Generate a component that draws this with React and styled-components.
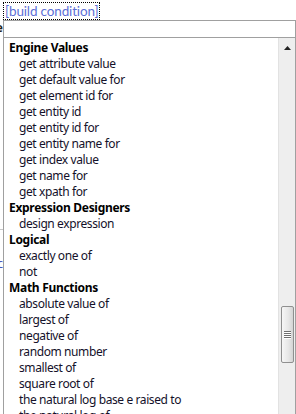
import styled, { createGlobalStyle } from "styled-components";

const GlobalStyle = createGlobalStyle`
  html, body {
    margin: 0;
    padding: 0;
    background: #fff;
  }
  body {
    font-family: "Noto Sans", "DejaVu Sans", sans-serif;
    width: 296px;
    height: 414px;
    overflow: hidden;
  }
`;

const Page = styled.div`
  position: relative;
  width: 296px;
  height: 414px;
  overflow: hidden;
`;

const LinkRow = styled.div`
  display: flex;
  padding: 2px 0 0 3px;
`;

const BuildLink = styled.a`
  font-family: Lato, sans-serif;
  font-size: 13.5px;
  letter-spacing: -0.15px;
  line-height: 16px;
  color: #5d6fd6;
  border: 1px dotted #000;
  padding: 0 1px;
  cursor: pointer;
`;

const Behind = styled.div`
  display: flex;
  flex-direction: column;
  margin-left: -30px;
  width: 33px;
  overflow: hidden;
  text-align: right;
`;

const BehindLabel = styled.div`
  font-size: 12px;
  line-height: 16px;
  height: ${(p) => p.h}px;
  margin-top: ${(p) => p.mt || 0}px;
  color: ${(p) => p.color || "#222"};
  font-weight: ${(p) => (p.bold ? "bold" : "normal")};
`;

const BehindRule = styled.div`
  height: 1px;
  background: #c8c8c8;
  margin-top: ${(p) => p.mt}px;
`;

const Popup = styled.div`
  position: absolute;
  left: 3px;
  top: 20px;
  width: 293px;
  height: 400px;
  box-sizing: border-box;
  border: 1px solid #a0a0a0;
  border-bottom: none;
  background: #fff;
  display: flex;
  flex-direction: column;
`;

const SearchBox = styled.div`
  height: 16px;
  border-bottom: 1px solid #a0a0a0;
`;

const ListArea = styled.div`
  flex: 1;
  display: flex;
  min-height: 0;
`;

const List = styled.ul`
  flex: 1;
  list-style: none;
  margin: 0;
  padding: 2px 0 0 0;
  overflow: hidden;
`;

const Item = styled.li`
  font-family: "Noto Sans", sans-serif;
  font-size: 12px;
  line-height: 16px;
  height: 16px;
  white-space: nowrap;
  padding-left: ${(p) => (p.$header ? 5 : 15)}px;
  font-weight: ${(p) => (p.$header ? "bold" : "normal")};
  color: ${(p) => (p.$header ? "#000" : "#14112a")};
  letter-spacing: ${(p) => (p.$header ? "-0.3px" : "-0.4px")};
`;

const Scrollbar = styled.div`
  width: 16px;
  background: #eeeeee;
  border-left: 1px solid #e2e2e2;
  display: flex;
  flex-direction: column;
  align-items: center;
`;

const Arrow = styled.div`
  height: 17px;
  display: flex;
  align-items: center;
  justify-content: center;
  margin-top: 1px;
`;

const Track = styled.div`
  flex: 1;
  width: 100%;
  display: flex;
  flex-direction: column;
  align-items: center;
`;

const Thumb = styled.div`
  width: 13px;
  height: 57px;
  margin-top: ${(p) => p.offset}px;
  box-sizing: border-box;
  border: 1px solid #8f8f8f;
  border-radius: 2px;
  background: linear-gradient(to right, #f6f6f6, #e6e6e6 60%, #d4d4d4);
  display: flex;
  flex-direction: column;
  align-items: center;
  justify-content: center;
  gap: 1px;
`;

const Grip = styled.div`
  width: 7px;
  height: 1px;
  background: #6f6f6f;
  box-shadow: 0 1px 0 #fff;
`;

const groups = [
  {
    title: "Engine Values",
    items: [
      "get attribute value",
      "get default value for",
      "get element id for",
      "get entity id",
      "get entity id for",
      "get entity name for",
      "get index value",
      "get name for",
      "get xpath for",
    ],
  },
  { title: "Expression Designers", items: ["design expression"] },
  { title: "Logical", items: ["exactly one of", "not"] },
  {
    title: "Math Functions",
    items: [
      "absolute value of",
      "largest of",
      "negative of",
      "random number",
      "smallest of",
      "square root of",
      "the natural log base e raised to",
      "the natural log of",
    ],
  },
];

export default function App() {
  return (
    <Page>
      <GlobalStyle />
      <LinkRow>
        <BuildLink>[build condition]</BuildLink>
      </LinkRow>
      <Behind>
        <BehindLabel h={20} bold>
          Rule
        </BehindLabel>
        <BehindRule mt={189} />
        <BehindLabel h={16} mt={26} color="#4455bb">
          abc
        </BehindLabel>
      </Behind>
      <Popup>
        <SearchBox />
        <ListArea>
          <List>
            {groups.map((g) => [
              <Item key={g.title} $header>
                {g.title}
              </Item>,
              ...g.items.map((it) => <Item key={g.title + it}>{it}</Item>),
            ])}
          </List>
          <Scrollbar>
            <Arrow>
              <svg width="7" height="4" viewBox="0 0 7 4">
                <path d="M3.5 0 L7 4 L0 4 Z" fill="#222" />
              </svg>
            </Arrow>
            <Track>
              <Thumb offset={250}>
                <Grip />
                <Grip />
                <Grip />
                <Grip />
              </Thumb>
            </Track>
          </Scrollbar>
        </ListArea>
      </Popup>
    </Page>
  );
}
